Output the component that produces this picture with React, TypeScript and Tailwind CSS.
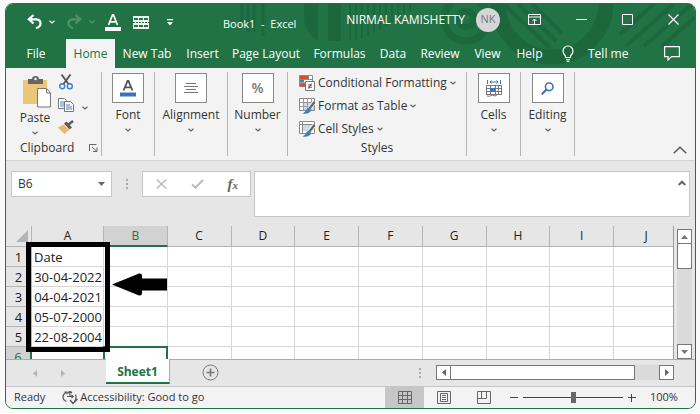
import type { ReactNode } from "react";
import clsx from "clsx";

const tabs = [
  { label: "File", width: "w-[60px]" },
  { label: "Home", width: "w-[49px]" },
  { label: "New Tab", width: "w-16" },
  { label: "Insert", width: "w-[47px]" },
  { label: "Page Layout", width: "w-20" },
  { label: "Formulas", width: "w-[67px]" },
  { label: "Data", width: "w-10" },
  { label: "Review", width: "w-[54px]" },
  { label: "View", width: "w-[41px]" },
  { label: "Help", width: "w-[43px]" },
];

const columns = ["A", "B", "C", "D", "E", "F", "G", "H", "I", "J"];
const dates = ["Date", "30-04-2022", "04-04-2021", "05-07-2000", "22-08-2004", ""];

function Chevron({ className }: { className?: string }) {
  return (
    <svg viewBox="0 0 6 4" className={clsx("w-[6px] h-1 shrink-0", className)} fill="none" stroke="currentColor" strokeWidth="1.2">
      <path d="M.5.7 3 3 5.5.7" />
    </svg>
  );
}

function Backdrop() {
  return (
    <svg className="absolute top-0 right-0 w-[689px] h-16" viewBox="6 4 689 64" fill="none" stroke="#1d673d">
      <path d="M242 4v18M248 4v28M254 4v28M263 4v32" strokeWidth="3" />
      <path d="M304 4h14v36q-14-6-14-24zM328 4h13v37h-13z" fill="#1d673d" stroke="none" />
      <path d="M350 4v36M356 4v36M362 4v34M368 4v32M374 4v28M380 4v26M386 4v22M392 4v18M398 4v14M404 4v10M410 4v7" strokeWidth="2" />
      <circle cx="466" cy="19" r="22" strokeWidth="7" />
      <circle cx="466" cy="19" r="8" strokeWidth="6" />
      <circle cx="552" cy="3" r="54" strokeWidth="15" />
      <path d="M504 4l46 44M518 4l38 37M532 4l30 29" strokeWidth="4" />
      <path d="M620 34l34-30M626 46l48-42M644 46l48-42M662 46l33-29" strokeWidth="4" />
    </svg>
  );
}

function TitleBar() {
  return (
    <div className="relative flex h-[35px] items-center text-white">
      <div className="flex items-center pl-[21px] pt-[1px]">
        <button aria-label="Undo">
          <svg width="15" height="16" viewBox="0 0 15 16" fill="none" stroke="currentColor" strokeWidth="2.2">
            <path d="M6.500 1 1.800 5.200l4.700 4.300M2 5.300h7.500q4 .3 4 4.200 0 3.500-4.500 4.700" />
          </svg>
        </button>
        <button aria-label="Undo history" className="ml-[7px]"><Chevron /></button>
        <button aria-label="Redo" className="ml-3 text-[#4f9169]">
          <svg width="15" height="16" viewBox="0 0 15 16" fill="none" stroke="currentColor" strokeWidth="2.2">
            <path d="M8.500 1l4.700 4.200-4.700 4.300M13 5.300H5.500q-4 .3-4 4.200 0 3.500 4.500 4.700" />
          </svg>
        </button>
        <button aria-label="Redo history" className="ml-[7px] text-[#4f9169]"><Chevron /></button>
        <button aria-label="Font color" className="ml-[10px] flex w-4 flex-col items-center">
          <svg width="16" height="17" viewBox="0 0 16 17" fill="none" stroke="currentColor">
            <path d="M3.500 11 7.600.8h.8L12.500 11M5 7.800h6" strokeWidth="1.700" />
            <path d="M0 15h16" strokeWidth="4" />
          </svg>
        </button>
        <button aria-label="Borders" className="ml-3">
          <svg width="16" height="13" viewBox="0 0 16 13">
            <path d="M0 0h16v13H0z" fill="#f3f3f3" />
            <path d="M1 2h4v2H1zM6 2h4v2H6zM11 2h4v2h-4zM1 9h4v2H1zM6 9h4v2H6zM11 9h4v2h-4z" fill="#217346" />
            <path d="M0 6.500h16" stroke="#217346" strokeDasharray="2 1" />
          </svg>
        </button>
        <button aria-label="Customize toolbar" className="ml-[18px]">
          <svg width="6" height="7" viewBox="0 0 6 7" fill="currentColor">
            <path d="M0 0h6v1.300H0zM0 3h6L3 6.500z" />
          </svg>
        </button>
      </div>
      <h1 className="flex-1 pt-[5px] text-center text-[11px] whitespace-pre">Book1  -  Excel</h1>
      <span className="pb-1 text-[12px] leading-4">NIRMAL KAMISHETTY</span>
      <span className="ml-[11px] mb-1 flex size-6 items-center justify-center rounded-full bg-[#d6d6d6] text-[11px] text-[#777]">NK</span>
      <div className="mb-1 ml-7 mr-[16px] flex items-center gap-[35px]">
        <button aria-label="Ribbon display options">
          <svg width="13" height="11" viewBox="0 0 13 11" fill="none" stroke="currentColor">
            <path d="M.5.5h12v10H.5zM.5 3h12M6.500 10V5M4.500 7l2-2 2 2" />
          </svg>
        </button>
        <button aria-label="Minimize">
          <svg width="11" height="11" viewBox="0 0 11 11" stroke="currentColor"><path d="M0 5.500h11" /></svg>
        </button>
        <button aria-label="Maximize">
          <svg width="11" height="11" viewBox="0 0 11 11" fill="none" stroke="currentColor"><path d="M.5.5h10v10H.5z" /></svg>
        </button>
        <button aria-label="Close">
          <svg width="11" height="11" viewBox="0 0 11 11" stroke="currentColor" strokeWidth="1.200"><path d="m.5.5 10 10m0-10-10 10" /></svg>
        </button>
      </div>
    </div>
  );
}

function TabBar() {
  return (
    <nav className="relative flex h-[29px] text-[12px] text-white">
      {tabs.map((tab) => (
        <button
          key={tab.label}
          className={clsx("whitespace-nowrap text-center", tab.width, tab.label === "Home" && "bg-[#f3f3f3] text-[#217346]")}
        >
          {tab.label}
        </button>
      ))}
      <button className="ml-[11px] flex items-center gap-[14px] whitespace-nowrap">
        <svg width="12" height="17" viewBox="0 0 12 17" fill="none" stroke="currentColor" strokeWidth="1.200">
          <path d="M3.500 12.500V11Q1 8.500 1 6a5 5 0 0 1 10 0q0 2.500-2.500 5v1.500zM4 14.500h4M4.500 16.300h3" />
        </svg>
        Tell me
      </button>
      <button aria-label="Comments" className="ml-auto mr-[15px]">
        <svg width="16" height="15" viewBox="0 0 16 15" fill="none" stroke="currentColor" strokeWidth="1.200">
          <path d="M.6.600h14.800v10H7.500l-3.500 3.500v-3.500H.6z" />
        </svg>
      </button>
    </nav>
  );
}

function ToolGroup({ label, width, children }: { label: string; width: string; children: ReactNode }) {
  return (
    <div className={clsx("border-r border-[#b5b5b5]", width)}>
      <button className="flex w-full flex-col items-center text-[12px] leading-4">
        <span className="mt-[1px] mb-1 flex h-[30px] w-8 items-center justify-center border border-[#8a8a8a] bg-white">{children}</span>
        {label}
        <Chevron className="mt-[5px] text-[#666]" />
      </button>
    </div>
  );
}

function StyleRow({ label, icon }: { label: string; icon: ReactNode }) {
  return (
    <button className="flex h-[23px] items-center gap-[3px] whitespace-nowrap text-[12px]">
      {icon}
      {label}
      <Chevron className="text-[#666]" />
    </button>
  );
}

function BrushIcon({ filled }: { filled?: boolean }) {
  return (
    <svg width="16" height="16" viewBox="0 0 16 16" fill="none">
      <path d="M.5.5h15v12H.5z" fill="#fff" stroke="#8a8a8a" />
      {filled ? (
        <>
          <path d="M4 4h9v6H4z" fill="#c5dcf0" />
          <path d="M.5 3.500h15M3.500.5v12" stroke="#8a8a8a" />
        </>
      ) : (
        <>
          <path d="M4 4h11v8H4z" fill="#c5dcf0" />
          <path d="M.5 4.500h15M.5 8.500h15M4.500.5v12M8.500.5v12M12.500.5v12" stroke="#9a9a9a" />
        </>
      )}
      <path d="M15.500 4 10 11" stroke="#f3f3f3" strokeWidth="4" />
      <path d="M15.500 4 10.500 10.500" stroke="#666" strokeWidth="2.200" />
      <path d="M10.500 9.500Q8 9.500 7 12t-3.500 3.500q5.500 1 8-2 1-2-1-4z" fill="#3c82c0" />
    </svg>
  );
}

function ConditionalIcon() {
  return (
    <svg width="16" height="16" viewBox="0 0 16 16" fill="none">
      <path d="M.5.500h13v11H.5z" fill="#fff" stroke="#8a8a8a" />
      <path d="M1 1h8v3H1zM1 8h5v3.500H1z" fill="#d35230" />
      <path d="M1 4.500h4v3H1z" fill="#3c82c0" />
      <path d="M.5 4.500h13M.5 8h6M9.500.5v4" stroke="#8a8a8a" />
      <path d="M6.500 6.500h9v9h-9z" fill="#fff" stroke="#777" />
      <path d="M9 10h4M9 12.200h4M12.300 8.500l-2.600 5.200" stroke="#444" strokeWidth=".9" />
    </svg>
  );
}

function Ribbon() {
  return (
    <div className="flex h-[93px] border-b border-[#d2d2d2] bg-[#f3f3f3] pt-1 pb-1">
      <div className="flex w-24 flex-col border-r border-[#b5b5b5]">
        <div className="flex pl-[13px]">
          <button className="flex w-8 flex-col items-center pt-1 text-[12px] leading-4">
            <svg width="30" height="32" viewBox="0 0 30 32" fill="none" className="ml-1">
              <path d="M1 4h24v24H1z" fill="#edc576" />
              <path d="M6 3h4q0-3 3.500-3T17 3h4v5H6z" fill="#666" />
              <circle cx="13.500" cy="3" r="1.300" fill="#f3f3f3" />
              <path d="M15.500 12.500h9l4 4.500v14h-13z" fill="#fff" stroke="#777" />
              <path d="M24.500 12.500V17h4" stroke="#777" />
            </svg>
            <span className="pt-[2px]">Paste</span>
            <Chevron className="mt-[5px] text-[#666]" />
          </button>
          <div className="ml-[7px] flex w-4 flex-col items-center gap-2 pt-[2px]">
            <button aria-label="Cut">
              <svg width="14" height="16" viewBox="0 0 14 16" fill="none">
                <path d="m2.500.5 7 9.500M11.500.5l-7 9.500" stroke="#555" strokeWidth="1.900" />
                <circle cx="3.200" cy="12.300" r="2.500" stroke="#3c7fc4" strokeWidth="1.400" />
                <circle cx="10.800" cy="12.300" r="2.500" stroke="#3c7fc4" strokeWidth="1.400" />
              </svg>
            </button>
            <button aria-label="Copy">
              <svg width="16" height="14" viewBox="0 0 16 14" fill="#fff" stroke="#777">
                <path d="M.5.5h6l2 2v8h-8z" />
                <path d="M2 4h4M2 6h4M2 8h4" stroke="#4a86c0" />
                <path d="M6.500 3.500h6l3 3v7h-9z" />
                <path d="M8 7h4M8 9h6M8 11h6" stroke="#4a86c0" />
              </svg>
            </button>
            <button aria-label="Format painter">
              <svg width="16" height="14" viewBox="0 0 16 14">
                <path d="M0 7.500 6 4.500l5 5.500-4.500 4z" fill="#edb765" />
                <path d="m6 3.500 2.500-2 5.500 6-2.500 2z" fill="#5a5a5a" />
                <path d="m10.500 4.500 4.500-3.500" stroke="#5a5a5a" strokeWidth="2.500" />
              </svg>
            </button>
          </div>
          <button aria-label="Copy options" className="ml-2 pt-2"><Chevron className="text-[#666]" /></button>
        </div>
        <div className="mt-auto flex items-center pl-[14px] text-[12px] leading-4">
          Clipboard
          <button aria-label="Clipboard settings" className="ml-auto mr-[3px]">
            <svg width="9" height="8" viewBox="0 0 9 8" fill="none" stroke="#666">
              <path d="M.5 7V.5h7M3 3l4.500 4M8 3.500v4H4" />
            </svg>
          </button>
        </div>
      </div>
      <ToolGroup label="Font" width="w-[53px]">
        <svg width="16" height="17" viewBox="0 0 16 17" fill="none">
          <path d="M3.500 10.500 7.600.8h.8l4.100 9.700M5.200 7.300h5.600" stroke="#555" strokeWidth="1.800" />
          <path d="M0 12.500h16v4H0z" fill="#3c76b8" />
        </svg>
      </ToolGroup>
      <ToolGroup label="Alignment" width="w-[73px]">
        <svg width="14" height="11" viewBox="0 0 14 11" stroke="#777">
          <path d="M2 .5h10M0 3.500h14M2 6.500h10M0 9.500h14" />
        </svg>
      </ToolGroup>
      <ToolGroup label="Number" width="w-[60px]">
        <span className="text-[14px] font-semibold text-[#777]">%</span>
      </ToolGroup>
      <div className="flex w-[179px] flex-col border-r border-[#b5b5b5] pl-[11px]">
        <StyleRow label="Conditional Formatting" icon={<ConditionalIcon />} />
        <StyleRow label="Format as Table" icon={<BrushIcon />} />
        <StyleRow label="Cell Styles" icon={<BrushIcon filled />} />
        <div className="mt-auto pr-[11px] text-center text-[12px] leading-4">Styles</div>
      </div>
      <ToolGroup label="Cells" width="w-[54px]">
        <svg width="16" height="17" viewBox="0 0 16 17" fill="none" stroke="#777">
          <path d="M1.500 0v4M14.500 0v4M4 2h8M5.500.5 4 2l1.500 1.500M10.500.5 12 2l-1.500 1.500" stroke="#3c76b8" />
          <path d="M.5 5.500h15v9H.5zM.5 8.500h15M.5 11.500h15M4.500 5.500v9M9.500 5.500v9M12.500 5.500v9M1 16q3 1 5-1 3 2 5 0" />
          <path d="M4 8h5v4H4z" fill="#3c76b8" stroke="none" />
        </svg>
      </ToolGroup>
      <ToolGroup label="Editing" width="w-[54px]">
        <svg width="13" height="13" viewBox="0 0 13 13" fill="none" stroke="#3c76b8">
          <circle cx="8.200" cy="4.800" r="3.800" strokeWidth="1.600" />
          <path d="m5.500 7.500-4.800 4.800" strokeWidth="2.200" />
        </svg>
      </ToolGroup>
      <button aria-label="Collapse ribbon" className="mt-auto mb-[2px] ml-auto mr-2">
        <svg width="14" height="8" viewBox="0 0 14 8" fill="none" stroke="#555" strokeWidth="1.400"><path d="m.7 7.300 6.300-6 6.300 6" /></svg>
      </button>
    </div>
  );
}

function FormulaBar() {
  return (
    <div className="flex h-[65px] items-start px-[5px] pt-[10px]">
      <div className="flex h-[26px] w-[101px] items-center border border-[#c6c6c6] bg-white pl-[6px] pr-[6px]">
        <input aria-label="Name box" defaultValue="B6" className="min-w-0 flex-1 text-[12px] outline-none" />
        <button aria-label="Named ranges">
          <svg width="7" height="4" viewBox="0 0 7 4"><path d="M0 0h7L3.500 4z" fill="#666" /></svg>
        </button>
      </div>
      <svg width="3" height="26" viewBox="0 0 3 26" fill="#aaa" className="ml-[14px]">
        <path d="M0 8h2v2H0zM0 12h2v2H0zM0 16h2v2H0z" />
      </svg>
      <div className="ml-[13px] flex h-[26px] w-[109px] items-center justify-between border border-[#c6c6c6] bg-white pl-[13px] pr-3">
        <button aria-label="Cancel">
          <svg width="11" height="10" viewBox="0 0 11 10" stroke="#bcbcbc" strokeWidth="1.500"><path d="m.7.500 9.600 9m0-9-9.600 9" /></svg>
        </button>
        <button aria-label="Enter">
          <svg width="13" height="10" viewBox="0 0 13 10" fill="none" stroke="#bcbcbc" strokeWidth="2.200"><path d="m1 5.500 3.500 3L12 1" /></svg>
        </button>
        <button aria-label="Insert function" className="flex items-baseline font-['Liberation_Serif',serif] text-[15px] leading-4 font-bold text-[#666] italic">
          f<span className="text-[11px]">x</span>
        </button>
      </div>
      <div className="ml-[3px] flex h-[46px] flex-1 items-start border border-[#c6c6c6] bg-white pr-[3px]">
        <input aria-label="Formula" className="h-full min-w-0 flex-1 px-2 text-[12px] outline-none" />
        <button aria-label="Collapse formula bar" className="mt-2">
          <svg width="8" height="6" viewBox="0 0 8 6" fill="none" stroke="#666" strokeWidth="2"><path d="m.7 5 3.300-3.300L7.300 5" /></svg>
        </button>
      </div>
    </div>
  );
}

function Grid() {
  return (
    <div className="relative flex h-[133px]">
      <div className="h-full min-w-0 flex-1 overflow-hidden border-r border-[#9b9b9b]">
        {/* the last column runs slightly past the visible area */}
        <table className="w-[calc(100%+5px)] table-fixed border-separate border-spacing-0 text-[13px] leading-[18px] text-[#222]">
          <colgroup>
            <col className="w-[26px]" />
            <col className="w-[72px]" />
          </colgroup>
          <thead>
            <tr className="h-[21px]">
              <th aria-label="Select all" className="border-r border-b border-[#b5b5b5]">
                <svg width="12" height="12" viewBox="0 0 12 12" className="ml-auto mr-[3px]"><path d="M12 0v12H0z" fill="#b5b5b5" /></svg>
              </th>
              {columns.map((col) => (
                <th
                  key={col}
                  className={clsx(
                    "p-0 text-[12px] font-normal",
                    col === "B"
                      ? "border-r border-b-2 border-r-[#b5b5b5] border-b-[#217346] bg-[#d2d2d2] text-[#217346]"
                      : "border-r border-b border-[#b5b5b5] last:border-r-0"
                  )}
                >
                  {col}
                </th>
              ))}
            </tr>
          </thead>
          <tbody>
            {dates.map((date, row) => (
              <tr key={row} className="h-5">
                <th
                  className={clsx(
                    "border-r border-b p-0 font-normal",
                    row === 5 ? "border-r-2 border-[#217346] bg-[#d2d2d2] text-[#217346]" : "border-[#b5b5b5]"
                  )}
                >
                  {row + 1}
                </th>
                {columns.map((col) => (
                  <td
                    key={col}
                    className={clsx(
                      "relative border-r border-b border-[#d6d6d6] bg-white p-0 whitespace-nowrap last:border-r-0",
                      row === 0 ? "pl-[2px]" : "pr-[1px] text-right"
                    )}
                  >
                    {col === "A" && date}
                    {col === "B" && row === 5 && <span className="absolute -inset-px border-2 border-[#217346]" />}
                  </td>
                ))}
              </tr>
            ))}
          </tbody>
        </table>
      </div>
      <div className="mx-[3px] mt-[3px] flex w-[15px] flex-col bg-[#dadada]">
        <button aria-label="Scroll up" className="flex h-[15px] items-center justify-center border border-[#777] bg-white">
          <svg width="7" height="4" viewBox="0 0 7 4"><path d="M0 4h7L3.500 0z" fill="#777" /></svg>
        </button>
        <div className="h-[25px] border border-t-0 border-[#777] bg-white" />
        <button aria-label="Scroll down" className="mt-auto flex h-[15px] items-center justify-center border border-[#777] bg-white">
          <svg width="7" height="4" viewBox="0 0 7 4"><path d="M0 0h7L3.500 4z" fill="#777" /></svg>
        </button>
      </div>
      {/* annotation over the date column */}
      <div className="absolute top-4 left-5 h-[110px] w-[84px] border-[5px] border-black" />
      <svg className="absolute top-[47px] left-[106px]" width="56" height="23" viewBox="0 0 56 23">
        <path d="M0 11.500 27 .5q3-.5 3 2v3h25v12H30v3q0 2.500-3 2z" />
      </svg>
    </div>
  );
}

function SheetBar() {
  return (
    <div className="flex h-7 items-start border-t border-b border-t-[#ababab] border-b-[#c6c6c6]">
      <div className="flex h-[26px] w-[100px] items-center gap-6 pl-[27px]">
        <button aria-label="Previous sheet">
          <svg width="4" height="7" viewBox="0 0 4 7"><path d="M4 0v7L0 3.500z" fill="#b5b5b5" /></svg>
        </button>
        <button aria-label="Next sheet">
          <svg width="4" height="7" viewBox="0 0 4 7"><path d="M0 0v7l4-3.500z" fill="#b5b5b5" /></svg>
        </button>
      </div>
      <button className="-mt-px h-[25px] w-16 border-r border-b-2 border-r-[#ababab] border-b-[#217346] bg-white pt-[2px] text-[12px] font-bold text-[#217346]">
        Sheet1
      </button>
      <button aria-label="New sheet" className="mt-1 ml-8">
        <svg width="17" height="17" viewBox="0 0 17 17" fill="none" stroke="#777">
          <circle cx="8.500" cy="8.500" r="7.500" />
          <path d="M8.500 4.500v8M4.500 8.500h8" strokeWidth="1.600" />
        </svg>
      </button>
      <svg width="3" height="26" viewBox="0 0 3 26" fill="#aaa" className="ml-auto">
        <path d="M0 8h2v2H0zM0 12h2v2H0zM0 16h2v2H0z" />
      </svg>
      <div className="mt-[5px] mr-[21px] ml-[14px] flex h-[15px] w-[238px] bg-[#dadada]">
        <button aria-label="Scroll left" className="flex w-[15px] items-center justify-center border border-[#777] bg-white">
          <svg width="4" height="7" viewBox="0 0 4 7"><path d="M4 0v7L0 3.500z" fill="#666" /></svg>
        </button>
        <div className="w-[184px] border border-l-0 border-[#777] bg-white" />
        <button aria-label="Scroll right" className="ml-auto flex w-[15px] items-center justify-center border border-[#777] bg-white">
          <svg width="4" height="7" viewBox="0 0 4 7"><path d="M0 0v7l4-3.500z" fill="#666" /></svg>
        </button>
      </div>
    </div>
  );
}

function StatusBar() {
  return (
    <footer className="flex h-[21px] items-center bg-[#f3f3f3] text-[11px] text-[#333]">
      <span className="ml-2">Ready</span>
      <button className="ml-[17px] flex items-center gap-[2px] whitespace-nowrap">
        <svg width="16" height="14" viewBox="0 0 16 14" fill="none" stroke="#555" strokeWidth="1.200">
          <path d="M4 1.500Q1 3 1 6t3.500 4.500M2.500 1H5v2.500M8 0v6M6 2l2-2 2 2M5 5.500h6M9.500 4l1.700 1.500L9.500 7M13.500 3.500q1.500 3-1 7M8 9l3 3.500L15.500 8" />
        </svg>
        Accessibility: Good to go
      </button>
      <button aria-label="Normal view" className="ml-auto flex h-full w-[39px] items-center justify-center bg-[#c6c6c6]">
        <svg width="14" height="13" viewBox="0 0 14 13" fill="none" stroke="#666">
          <path d="M.5.500h13v12H.5zM.5 4.500h13M.5 8.500h13M4.500.5v12M9.500.5v12" />
        </svg>
      </button>
      <button aria-label="Page layout view" className="ml-[13px]">
        <svg width="14" height="13" viewBox="0 0 14 13" fill="none" stroke="#666">
          <path d="M.5.500h13v12H.5zM3.500 2.500h7v8h-7zM5 4.500h4M5 6.500h4M5 8.500h4" />
        </svg>
      </button>
      <button aria-label="Page break preview" className="ml-[26px]">
        <svg width="14" height="13" viewBox="0 0 14 13" fill="none" stroke="#666">
          <path d="M.5.500h13v12H.5zM4.500.5v7M9.500.5v7M.5 7.500h9" />
        </svg>
      </button>
      <button aria-label="Zoom out" className="ml-[19px]">
        <svg width="8" height="8" viewBox="0 0 8 8" stroke="#444"><path d="M0 3.500h8" /></svg>
      </button>
      <input
        type="range"
        aria-label="Zoom"
        defaultValue={50}
        className="mx-[5px] h-[11px] w-[100px] appearance-none bg-[linear-gradient(#444,#444)] bg-[length:100%_1px] bg-center bg-no-repeat [&::-webkit-slider-thumb]:h-[11px] [&::-webkit-slider-thumb]:w-[5px] [&::-webkit-slider-thumb]:appearance-none [&::-webkit-slider-thumb]:bg-[#666]"
      />
      <button aria-label="Zoom in">
        <svg width="8" height="8" viewBox="0 0 8 8" stroke="#444"><path d="M0 3.500h8M3.500 0v8" /></svg>
      </button>
      <span className="w-[59px] pl-[14px] whitespace-nowrap">100%</span>
    </footer>
  );
}

export default function App() {
  return (
    <div className="bg-[#fafafa] pt-[3px] pr-1 pb-1 pl-[5px] font-['Open_Sans',sans-serif] text-[#333]">
      <main className="overflow-hidden rounded-lg border border-[#217346] bg-[#e6e6e6]">
        <header className="relative overflow-hidden bg-[#217346]">
          <Backdrop />
          <TitleBar />
          <TabBar />
        </header>
        <Ribbon />
        <FormulaBar />
        <Grid />
        <SheetBar />
        <StatusBar />
      </main>
    </div>
  );
}
